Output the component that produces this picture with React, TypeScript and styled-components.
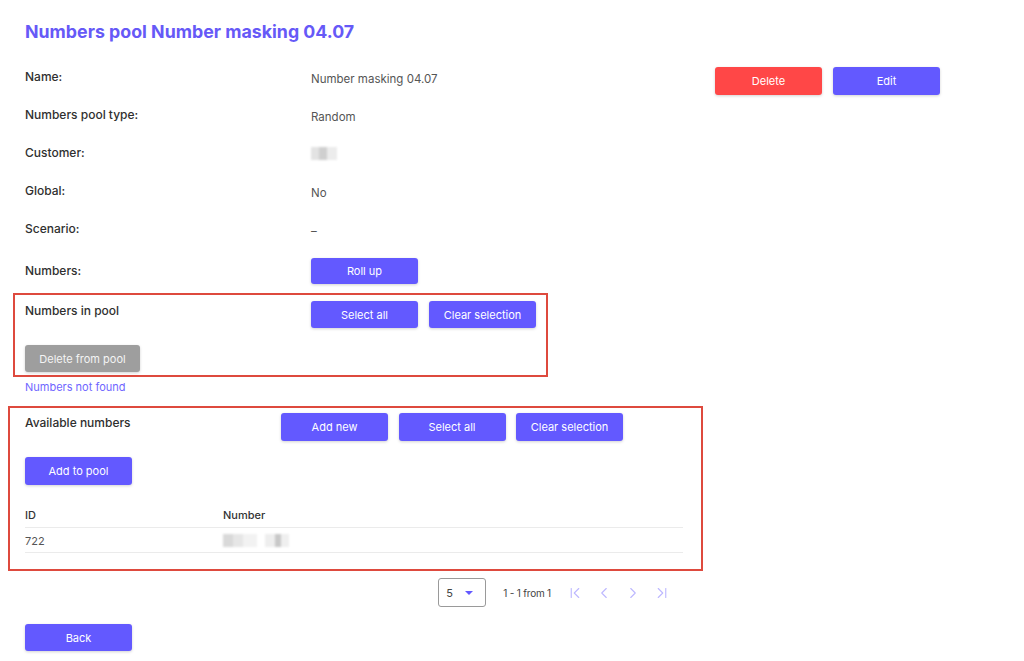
import React from "react";
import styled, { createGlobalStyle, css } from "styled-components";
import { ChevronFirst, ChevronLeft, ChevronRight, ChevronLast } from "lucide-react";

const Global = createGlobalStyle`
  html, body { margin: 0; padding: 0; background: #ffffff; }
  body { font-family: Inter, "Liberation Sans", sans-serif; color: #333; }
  * { box-sizing: border-box; }
`;

const Page = styled.div`
  padding: 20px 0 10px 25px;
  width: 1024px;
`;

const Title = styled.h1`
  margin: 0 0 14px;
  font-size: 17.8px;
  line-height: 24px;
  font-weight: 700;
  color: #6659f7;
`;

const Top = styled.div`
  display: flex;
  align-items: flex-start;
`;

const Info = styled.div`
  width: 690px;
  display: flex;
  flex-direction: column;
`;

const Actions = styled.div`
  display: flex;
  gap: 11px;
  padding-top: 9px;
`;

const Row = styled.div<{ $h?: number; $pt?: number }>`
  display: grid;
  grid-template-columns: 286px 1fr;
  align-items: center;
  height: ${(p) => p.$h ?? 38}px;
  padding-top: ${(p) => p.$pt ?? 0}px;
`;

const Label = styled.div`
  font-size: 12px;
  font-weight: 500;
  color: #2f2f2f;
  line-height: 16px;
`;

const Value = styled.div<{ $dy?: number }>`
  font-size: 11.5px;
  color: #555;
  line-height: 16px;
  transform: translateY(${(p) => p.$dy ?? 0}px);
`;

const Blur = styled.div<{ $w: number }>`
  width: ${(p) => p.$w}px;
  height: 13px;
  display: flex;
  filter: blur(1.2px);
`;

const BlurCell = styled.span<{ $c: string; $w: number }>`
  display: block;
  width: ${(p) => p.$w}px;
  height: 100%;
  background: ${(p) => p.$c};
`;

const Button = styled.button<{ $variant?: "primary" | "danger" | "muted"; $w?: number; $h?: number }>`
  width: ${(p) => p.$w ?? 107}px;
  height: ${(p) => p.$h ?? 27}px;
  border: none;
  border-radius: 3px;
  font-family: inherit;
  font-size: 11px;
  color: #fff;
  cursor: pointer;
  box-shadow: 0 1px 3px rgba(0, 0, 0, 0.18);
  ${(p) =>
    p.$variant === "danger"
      ? css`background: #ff4747;`
      : p.$variant === "muted"
      ? css`background: #9e9e9e; color: #f4f4f4;`
      : css`background: #6359ff;`}
`;

const Annot = styled.div<{ $ml: number; $mt?: number; $pl: number; $pr: number; $pt: number; $pb: number }>`
  width: fit-content;
  margin-left: ${(p) => p.$ml}px;
  margin-top: ${(p) => p.$mt ?? 0}px;
  padding: ${(p) => `${p.$pt}px ${p.$pr}px ${p.$pb}px ${p.$pl}px`};
  border: 2px solid #de4a3e;
`;

const SectionHead = styled.div<{ $col: number }>`
  display: grid;
  grid-template-columns: ${(p) => p.$col}px auto;
  align-items: start;
`;

const SectionLabel = styled(Label)`
  padding-top: 2px;
`;

const ButtonGroup = styled.div<{ $gap?: number }>`
  display: flex;
  gap: ${(p) => p.$gap ?? 11}px;
`;

const SubRow = styled.div<{ $mt: number }>`
  margin-top: ${(p) => p.$mt}px;
`;

const NotFound = styled.div`
  margin: 3px 0 12px;
  font-size: 11px;
  line-height: 14px;
  color: #6f66ff;
`;

const Table = styled.div`
  width: 658px;
  margin-top: 17px;
`;

const TRow = styled.div<{ $head?: boolean }>`
  display: grid;
  grid-template-columns: 198px 1fr;
  align-items: center;
  height: ${(p) => (p.$head ? 26 : 25)}px;
  border-bottom: 1.5px solid #ebebeb;
  font-size: 11px;
  color: ${(p) => (p.$head ? "#333" : "#555")};
  font-weight: ${(p) => (p.$head ? 500 : 400)};
  padding-top: ${(p) => (p.$head ? 0 : 1)}px;
`;

const Pager = styled.div`
  width: 658px;
  margin-top: 7px;
  display: flex;
  justify-content: flex-end;
  align-items: center;
  padding-right: 7px;
`;

const PageSize = styled.div`
  width: 48px;
  height: 29px;
  border: 1px solid #9a9a9a;
  border-radius: 3px;
  display: flex;
  align-items: center;
  justify-content: space-between;
  padding: 0 12px 0 7px;
  font-size: 11px;
  color: #444;
`;

const Caret = styled.span`
  width: 0;
  height: 0;
  border-left: 4px solid transparent;
  border-right: 4px solid transparent;
  border-top: 4px solid #6359ff;
`;

const Range = styled.div`
  font-size: 10px;
  color: #444;
  margin: 0 9px 0 17px;
  letter-spacing: -0.2px;
`;

const PageBtn = styled.span`
  width: 29px;
  height: 24px;
  display: flex;
  align-items: center;
  justify-content: center;
  color: #bdb8ff;
`;

const BackRow = styled.div`
  margin-top: 17px;
`;

export default function App() {
  return (
    <>
      <Global />
      <Page>
        <Title>Numbers pool Number masking 04.07</Title>
        <Top>
          <Info>
            <Row>
              <Label>Name:</Label>
              <Value $dy={2}>Number masking 04.07</Value>
            </Row>
            <Row>
              <Label>Numbers pool type:</Label>
              <Value $dy={2}>Random</Value>
            </Row>
            <Row>
              <Label>Customer:</Label>
              <Blur $w={26}>
                <BlurCell $c="#e3e3e3" $w={8} />
                <BlurCell $c="#cfcfcf" $w={8} />
                <BlurCell $c="#ececec" $w={10} />
              </Blur>
            </Row>
            <Row>
              <Label>Global:</Label>
              <Value $dy={2}>No</Value>
            </Row>
            <Row>
              <Label>Scenario:</Label>
              <Value $dy={2}>–</Value>
            </Row>
            <Row $h={36} $pt={10}>
              <Label>Numbers:</Label>
              <div>
                <Button $h={26}>Roll up</Button>
              </div>
            </Row>
          </Info>
          <Actions>
            <Button $variant="danger" $h={28}>Delete</Button>
            <Button $h={28}>Edit</Button>
          </Actions>
        </Top>

        <Annot $ml={-12} $mt={9} $pl={10} $pr={10} $pt={6} $pb={3}>
          <SectionHead $col={286}>
            <SectionLabel>Numbers in pool</SectionLabel>
            <ButtonGroup>
              <Button>Select all</Button>
              <Button>Clear selection</Button>
            </ButtonGroup>
          </SectionHead>
          <SubRow $mt={17}>
            <Button $variant="muted" $w={115}>Delete from pool</Button>
          </SubRow>
        </Annot>
        <NotFound>Numbers not found</NotFound>

        <Annot $ml={-17} $pl={15} $pr={18} $pt={5} $pb={16}>
          <SectionHead $col={256}>
            <SectionLabel>Available numbers</SectionLabel>
            <ButtonGroup $gap={10.5}>
              <Button $h={28}>Add new</Button>
              <Button $h={28}>Select all</Button>
              <Button $h={28}>Clear selection</Button>
            </ButtonGroup>
          </SectionHead>
          <SubRow $mt={16}>
            <Button $h={28}>Add to pool</Button>
          </SubRow>
          <Table>
            <TRow $head>
              <span>ID</span>
              <span>Number</span>
            </TRow>
            <TRow>
              <span>722</span>
              <Blur $w={66}>
                <BlurCell $c="#d9d9d9" $w={10} />
                <BlurCell $c="#e6e6e6" $w={10} />
                <BlurCell $c="#f2f2f2" $w={14} />
                <BlurCell $c="#ffffff" $w={8} />
                <BlurCell $c="#eeeeee" $w={10} />
                <BlurCell $c="#c8c8c8" $w={6} />
                <BlurCell $c="#efefef" $w={8} />
              </Blur>
            </TRow>
          </Table>
        </Annot>

        <Pager>
          <PageSize>
            <span>5</span>
            <Caret />
          </PageSize>
          <Range>1 - 1 from 1</Range>
          <PageBtn><ChevronFirst size={18} strokeWidth={1.5} /></PageBtn>
          <PageBtn><ChevronLeft size={18} strokeWidth={1.5} /></PageBtn>
          <PageBtn><ChevronRight size={18} strokeWidth={1.5} /></PageBtn>
          <PageBtn><ChevronLast size={18} strokeWidth={1.5} /></PageBtn>
        </Pager>

        <BackRow>
          <Button>Back</Button>
        </BackRow>
      </Page>
    </>
  );
}
